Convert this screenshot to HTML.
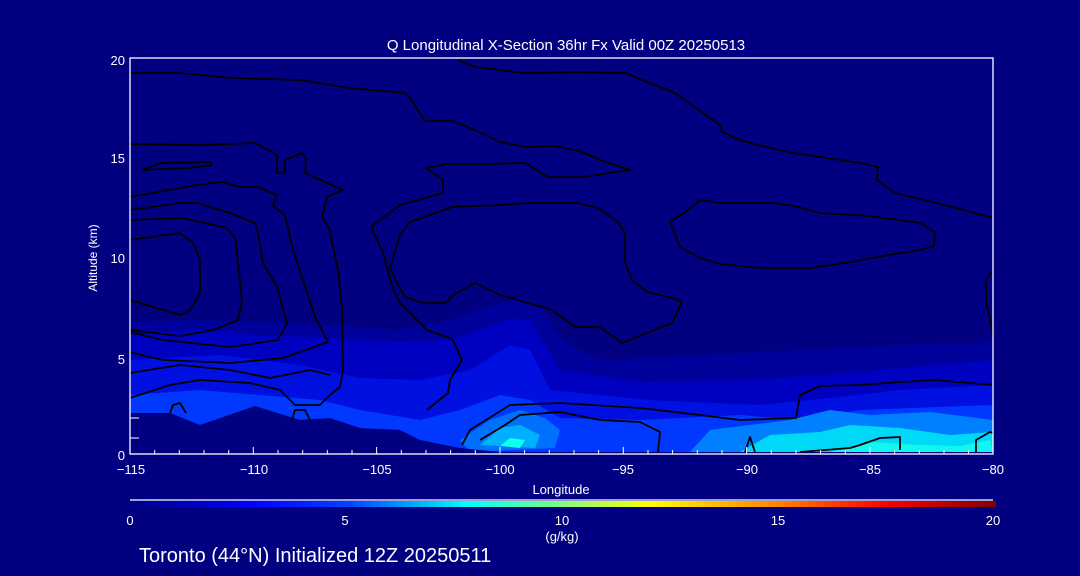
<!DOCTYPE html>
<html><head><meta charset="utf-8"><style>
html,body{margin:0;padding:0;background:#000080;width:1080px;height:576px;overflow:hidden}
svg{display:block}
text{font-family:"Liberation Sans",sans-serif;fill:#fff}
</style></head><body>
<svg width="1080" height="576" viewBox="0 0 1080 576">
<defs>
<linearGradient id="cb" x1="0" x2="1">
<stop offset="0" stop-color="#000080"/>
<stop offset="0.14" stop-color="#0000ff"/>
<stop offset="0.25" stop-color="#0040ff"/>
<stop offset="0.39" stop-color="#00ffff"/>
<stop offset="0.5" stop-color="#80ff80"/>
<stop offset="0.6" stop-color="#ffff00"/>
<stop offset="0.75" stop-color="#ff8000"/>
<stop offset="0.87" stop-color="#ff0000"/>
<stop offset="1" stop-color="#800000"/>
</linearGradient>
</defs>
<rect width="1080" height="576" fill="#000080"/>
<!-- shading -->
<polygon fill="#00009a" points="130,322 200,320 260,322 330,325 400,330 450,320 480,310 500,303 520,298 540,305 555,330 570,345 600,360 700,355 800,350 900,345 993,342 993,455 130,455"/>
<polygon fill="#0000c0" points="130,335 200,330 260,335 330,338 400,342 450,340 480,330 510,318 530,320 545,345 560,370 640,382 750,380 820,375 900,368 993,360 993,455 130,455"/>
<polygon fill="#0010e0" points="130,360 220,355 300,365 360,378 420,380 470,370 510,345 530,350 550,390 650,400 760,405 830,398 900,390 993,385 993,455 130,455"/>
<polygon fill="#0038ff" points="130,395 200,390 260,395 320,400 360,410 420,420 460,410 500,395 530,400 560,418 640,420 740,415 800,420 860,410 993,405 993,455 130,455"/>
<polygon fill="#0070ff" points="460,440 490,420 520,410 545,418 560,430 555,448 470,452"/>
<polygon fill="#0080ff" points="690,452 710,430 790,420 830,410 870,415 930,412 993,420 993,455 690,455"/>
<polygon fill="#00b0ff" points="480,445 500,428 520,425 540,435 535,448"/>
<polygon fill="#00d8f8" points="740,452 770,435 820,432 850,425 900,428 950,435 993,432 993,455 740,455"/>
<polygon fill="#10ffee" points="500,446 510,438 525,440 520,448"/>
<polygon fill="#10f8ee" points="830,452 870,442 920,445 960,446 990,440 993,455 830,455"/>
<!-- terrain -->
<polygon fill="#000080" points="130,413 170,413 200,425 255,406 300,420 330,418 360,428 400,430 420,440 460,448 500,452 993,452 993,455 130,455"/>
<!-- contours -->
<g fill="none" stroke="#000" stroke-width="1.8" stroke-linejoin="round">
<polyline points="458,60 475,67 525,73 575,72 625,73 650,83 675,93 720,125 722,132 740,140 770,148 795,153 860,163 878,167 877,180 895,193 945,205 993,218"/>
<polyline points="130,73 180,73 230,78 300,80 350,88 405,93 410,98 425,121 453,121 475,130 500,142 525,147 555,146 580,151 600,160 630,170 583,177 548,177 525,163 490,164 447,164 426,168 443,180 443,193 400,205 373,225 372,230 383,252 392,287 400,303 427,330 447,337 453,340 462,360 450,380 448,393 427,410"/>
<polyline points="700,200 722,203 770,203 795,206 820,213 870,216 920,223 935,232 934,246 920,250 900,253 845,263 810,268 760,268 720,264 700,258 680,247 670,222 688,210 700,200"/>
<polyline points="530,203 578,203 598,208 618,222 625,233 625,262 632,280 647,292 672,298 682,302 672,323 622,343 600,327 575,327 552,310 525,302 500,295 475,283 453,295 445,303 422,303 405,297 397,283 390,268 400,235 410,222 452,207 500,205 530,203"/>
<polyline points="993,270 986,280 986,302 992,328 993,338"/>
<polyline points="130,144 200,145 255,143 277,155 277,173 285,173 285,160 302,153 306,158 305,173 343,190 327,197 322,217 330,230 333,247 338,270 342,307 343,370 340,387 330,395"/>
<polyline points="142,170 160,163 210,162 212,165 190,168 142,170"/>
<polyline points="130,197 197,185 223,182 240,187 257,187 277,195 273,206 285,215 293,250 303,280 315,317 328,342 283,358 230,363 163,360 130,352"/>
<polyline points="130,210 180,203 197,203 230,213 255,223 258,233 263,263 277,287 287,323 278,340 230,347 163,340 130,332"/>
<polyline points="130,220 182,218 227,228 235,238 237,253 242,302 238,320 213,330 180,336 130,330"/>
<polyline points="130,240 180,233 193,243 200,260 200,293 190,310 180,315 130,300"/>
<polyline points="130,373 180,365 230,370 270,378 310,370 330,375"/>
<polyline points="130,398 170,385 200,380 250,383 280,390 295,405 320,405 330,395"/>
<polyline points="170,413 173,405 180,403 186,413"/>
<polyline points="292,420 295,410 305,410 310,420"/>
<polyline points="480,440 505,425 520,415 560,412 600,420 640,422 660,432 658,452"/>
<polyline points="462,445 470,430 510,405 560,403 640,408 700,415 740,420 796,418 800,395 820,386 860,385 900,382 935,380 993,385"/>
<polyline points="800,452 850,448 860,445 880,438 900,437 900,450"/>
<polyline points="745,452 750,437 755,452"/>
<polyline points="976,452 976,440 990,432 993,433"/>
</g>
<!-- axes -->
<g stroke="#fff" stroke-width="1.3" fill="none">
<rect x="130" y="58" width="863" height="396"/>
</g>
<g stroke="#fff" stroke-width="1">
<path d="M130,454V447M154.7,454V450M179.3,454V450M204,454V450M228.7,454V450M253.3,454V447M278,454V450M302.7,454V450M327.3,454V450M352,454V450M376.6,454V447M401.3,454V450M426,454V450M450.6,454V450M475.3,454V450M500,454V447M524.6,454V450M549.3,454V450M574,454V450M598.6,454V450M623.3,454V447M648,454V450M672.6,454V450M697.3,454V450M722,454V450M746.6,454V447M771.3,454V450M796,454V450M820.6,454V450M845.3,454V450M870,454V447M894.6,454V450M919.3,454V450M944,454V450M968.6,454V450M993,454V447"/>
<path d="M130,418H139M130,438H139"/>
</g>
<line x1="130" y1="500" x2="993" y2="500" stroke="#fff" stroke-width="1.2"/>
<rect x="130" y="501" width="866" height="6" fill="url(#cb)"/>
<g font-size="13">
<text x="566" y="50" text-anchor="middle" font-size="15">Q Longitudinal X-Section 36hr  Fx Valid 00Z 20250513</text>
<text x="125" y="65" text-anchor="end">20</text>
<text x="125" y="163" text-anchor="end">15</text>
<text x="125" y="263" text-anchor="end">10</text>
<text x="125" y="364" text-anchor="end">5</text>
<text x="125" y="460" text-anchor="end">0</text>
<g text-anchor="middle">
<text x="131" y="474">−115</text><text x="254" y="474">−110</text><text x="377" y="474">−105</text>
<text x="500" y="474">−100</text><text x="623" y="474">−95</text><text x="747" y="474">−90</text>
<text x="870" y="474">−85</text><text x="993" y="474">−80</text>
<text x="561" y="494">Longitude</text>
<text x="130" y="525">0</text><text x="345" y="525">5</text><text x="562" y="525">10</text>
<text x="778" y="525">15</text><text x="993" y="525">20</text>
<text x="562" y="541">(g/kg)</text>
</g>
<text transform="translate(97,258) rotate(-90)" text-anchor="middle" font-size="12">Altitude (km)</text>
<text x="139" y="562" font-size="20">Toronto (44°N) Initialized 12Z 20250511</text>
</g>
</svg>
</body></html>
